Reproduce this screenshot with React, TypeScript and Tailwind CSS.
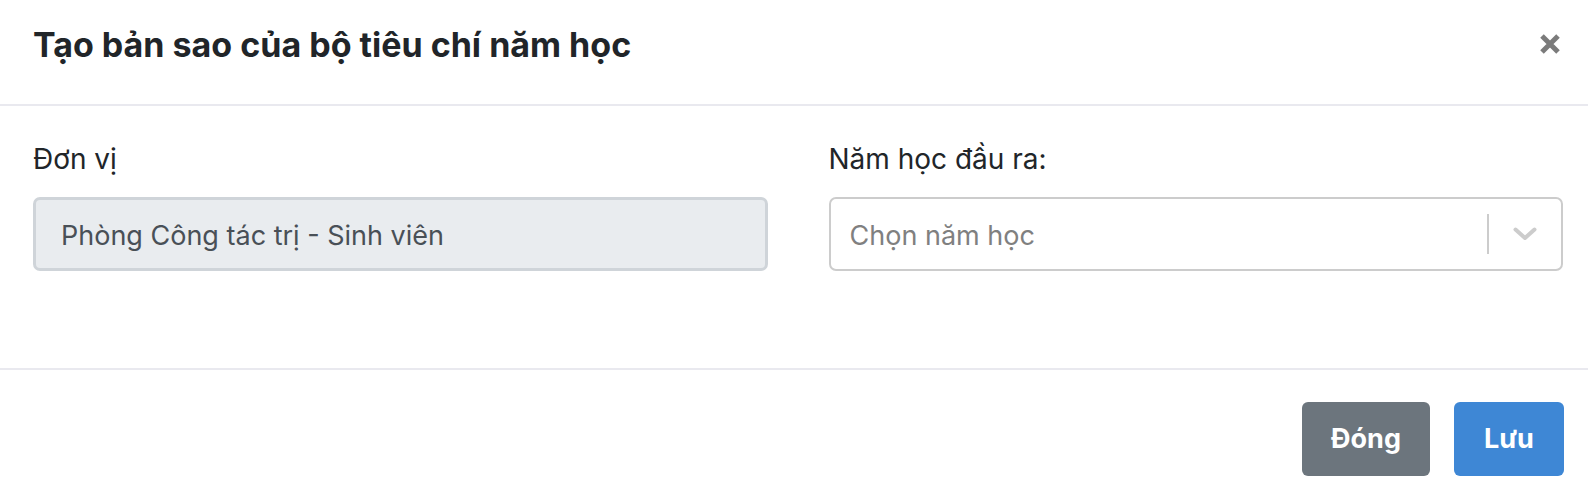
import React from "react";

export default function App() {
  return (
    <div className="w-[1588px] h-[502px] bg-white text-[#212529] overflow-hidden" style={{ fontFamily: 'Inter, "Liberation Sans", Arial, sans-serif' }}>
      <div className="h-[106px] border-b-2 border-[#e9e9ef] flex items-start justify-between pl-[33px] pr-[27px] pt-[25px]">
        <h5 className="text-[34px] leading-[40px] font-bold text-[#212529]">Tạo bản sao của bộ tiêu chí năm học</h5>
        <button className="mt-[8px] w-[22px] h-[22px] flex items-center justify-center">
          <svg width="22" height="22" viewBox="0 0 22 22">
            <path d="M3 3 L19 19 M19 3 L3 19" stroke="#7b7b7b" strokeWidth="5" strokeLinecap="butt" />
          </svg>
        </button>
      </div>
      <div className="h-[264px] border-b-2 border-[#e9e9ef] pl-[33px] pr-[25px] pt-[34px]">
        <div className="grid grid-cols-2 gap-x-[61px]">
          <div>
            <div className="text-[28px] leading-[39px] mb-[18px]">Đơn vị</div>
            <div className="h-[74px] rounded-[7px] border-[3px] border-[#cfd4d9] bg-[#e9ecef] flex items-center pl-[25px] pt-[5px] text-[27px] text-[#495057]">
              Phòng Công tác trị - Sinh viên
            </div>
          </div>
          <div>
            <div className="text-[28px] leading-[39px] mb-[18px]">Năm học đầu ra:</div>
            <div className="h-[74px] rounded-[7px] border-2 border-[#cccccc] bg-white flex items-center">
              <div className="flex-1 pl-[19px] pt-[5px] text-[27px] text-[#808080]">Chọn năm học</div>
              <div className="w-[2px] h-[40px] bg-[#cccccc]" />
              <div className="w-[72px] flex items-center justify-center">
                <svg width="24" height="14" viewBox="0 0 24 14">
                  <path d="M2.5 2.5 L12 11 L21.5 2.5" fill="none" stroke="#cccccc" strokeWidth="4" strokeLinecap="round" strokeLinejoin="round" />
                </svg>
              </div>
            </div>
          </div>
        </div>
      </div>
      <div className="flex justify-end gap-[24px] pr-[24px] pt-[32px]">
        <button className="h-[74px] w-[128px] rounded-[6px] bg-[#6c757d] text-white text-[27px] font-bold">Đóng</button>
        <button className="h-[74px] w-[110px] rounded-[6px] bg-[#3e87d5] text-white text-[27px] font-bold">Lưu</button>
      </div>
    </div>
  );
}
